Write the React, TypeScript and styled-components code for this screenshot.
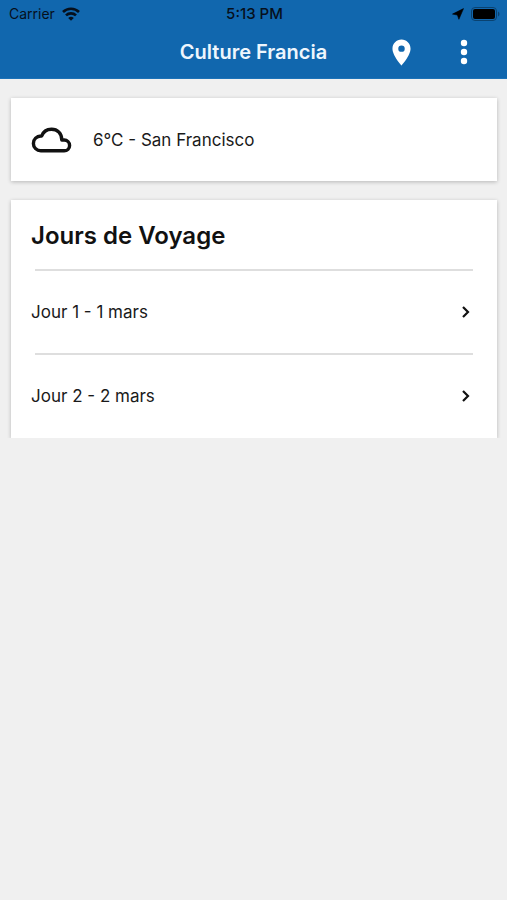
import React from "react";
import styled, { createGlobalStyle } from "styled-components";

const GlobalStyle = createGlobalStyle`
  *, *::before, *::after { box-sizing: border-box; }
  body {
    margin: 0;
    background: #f0f0f0;
    color: #1a1a1a;
    font-family: Inter, "Liberation Sans", sans-serif;
  }
`;

const Screen = styled.div`
  min-height: 100vh;
  background: #f0f0f0;
`;

const Header = styled.header`
  background: #1167ae;
  border-bottom: 1px solid #1c72b8;
`;

const StatusBar = styled.div`
  display: grid;
  grid-template-columns: 1fr auto 1fr;
  align-items: center;
  height: 26px;
  padding: 2px 7px 0 9px;
  color: #06101c;
  font-size: 14px;
  line-height: 20px;
`;

const StatusGroup = styled.div<{ $end?: boolean }>`
  display: flex;
  align-items: center;
  justify-content: ${(p) => (p.$end ? "flex-end" : "flex-start")};
  gap: 7px;
`;

const Clock = styled.time`
  font-size: 15px;
  font-weight: 500;
`;

const TitleBar = styled.div`
  display: grid;
  grid-template-columns: 1fr auto 1fr;
  align-items: center;
  height: 52px;
`;

const Title = styled.h1`
  grid-column: 2;
  margin: 0;
  color: #eef6fd;
  font-size: 20px;
  font-weight: 600;
  line-height: 28px;
`;

const Actions = styled.div`
  display: flex;
  justify-content: flex-end;
  gap: 27px;
  padding-right: 25px;
`;

const IconButton = styled.button`
  display: flex;
  align-items: center;
  justify-content: center;
  width: 36px;
  height: 36px;
  padding: 0;
  border: 0;
  background: none;
  color: #fff;
  cursor: pointer;
`;

const Content = styled.main`
  display: grid;
  gap: 19px;
  padding: 19px 10px 0 11px;
`;

const Card = styled.section`
  background: #fff;
  box-shadow: 0 1px 4px rgba(0, 0, 0, 0.24);
`;

const WeatherCard = styled(Card)`
  display: flex;
  align-items: center;
  gap: 21px;
  height: 83px;
  padding: 0 20px;
  font-size: 17px;
  line-height: 24px;
`;

const DaysClip = styled.div`
  overflow: hidden;
  margin: -4px -6px 0;
  padding: 4px 6px 0;
`;

const DaysTitle = styled.h2`
  margin: 0;
  padding: 20px 20px 17px;
  font-size: 24px;
  font-weight: 600;
  line-height: 32px;
  color: #111;
`;

const DayList = styled.ul`
  margin: 0;
  padding: 0 0 1px;
  list-style: none;
`;

const DayItem = styled.li`
  &::before {
    content: "";
    display: block;
    height: 2px;
    margin: 0 24px;
    background: #dedede;
  }
`;

const DayLink = styled.a`
  display: flex;
  align-items: center;
  justify-content: space-between;
  height: 82px;
  padding: 0 26px 0 20px;
  color: #1a1a1a;
  font-size: 17px;
  line-height: 24px;
  text-decoration: none;
`;

const WifiIcon = () => (
  <svg width="18" height="14" viewBox="0 0 18 14" fill="none" stroke="currentColor" strokeWidth="2.6" aria-hidden="true">
    <path d="M1 5a11.3 11.3 0 0 1 16 0" />
    <path d="M4 8.4a7.1 7.1 0 0 1 10 0" />
    <path d="M9 13.800 6.200 11a4 4 0 0 1 5.600 0z" fill="currentColor" stroke="none" />
  </svg>
);

const LocationIcon = () => (
  <svg width="12" height="12" viewBox="0 0 12 12" fill="#000" stroke="#000" strokeWidth="0.6" strokeLinejoin="round" aria-hidden="true">
    <path d="M11.500.6 6.900 11.300 5.400 7 .5 6.100z" />
  </svg>
);

const BatteryIcon = () => (
  <svg width="29" height="14" viewBox="0 0 29 14" aria-hidden="true">
    <rect x="0.5" y="0.5" width="25" height="13" rx="3.5" fill="none" stroke="#0a4270" />
    <rect x="2" y="2" width="22" height="10" rx="2" fill="#000" />
    <path d="M27 4.5c2 1 2 4 0 5z" fill="#0a4270" />
  </svg>
);

const PinIcon = () => (
  <svg width="31" height="31" viewBox="0 0 24 24" fill="currentColor" aria-hidden="true">
    <path d="M12 2C8.13 2 5 5.13 5 9c0 5.25 7 13 7 13s7-7.75 7-13c0-3.87-3.13-7-7-7zm0 9.5a2.5 2.5 0 0 1 0-5 2.5 2.5 0 0 1 0 5z" />
  </svg>
);

const MoreIcon = () => (
  <svg width="36" height="36" viewBox="0 0 36 36" fill="currentColor" aria-hidden="true">
    <circle cx="18" cy="9" r="3.2" />
    <circle cx="18" cy="18" r="3.2" />
    <circle cx="18" cy="27" r="3.2" />
  </svg>
);

const CloudIcon = () => (
  <svg width="41" height="26" viewBox="0 0 41 26" fill="none" stroke="#111" strokeWidth="3.4" strokeLinejoin="round" aria-hidden="true">
    <path d="M9.800 23.800H33.200a5.400 5.400 0 0 0 0-10.800h-2.400C30.800 6.500 26.500 2.200 20.500 2.200c-4.600 0-8.400 2.700-9.800 6.800H9.800a7.400 7.400 0 0 0 0 14.800z" />
  </svg>
);

const ChevronIcon = () => (
  <svg width="10" height="14" viewBox="0 0 10 14" fill="none" stroke="#111" strokeWidth="2.2" aria-hidden="true">
    <path d="m2 2 5 5-5 5" />
  </svg>
);

const days = ["Jour 1 - 1 mars", "Jour 2 - 2 mars"];

export default function App() {
  return (
    <Screen>
      <GlobalStyle />
      <Header>
        <StatusBar>
          <StatusGroup>
            <span>Carrier</span>
            <WifiIcon />
          </StatusGroup>
          <Clock>5:13 PM</Clock>
          <StatusGroup $end>
            <LocationIcon />
            <BatteryIcon />
          </StatusGroup>
        </StatusBar>
        <TitleBar>
          <Title>Culture Francia</Title>
          <Actions>
            <IconButton type="button" aria-label="Carte">
              <PinIcon />
            </IconButton>
            <IconButton type="button" aria-label="Menu">
              <MoreIcon />
            </IconButton>
          </Actions>
        </TitleBar>
      </Header>
      <Content>
        <WeatherCard>
          <CloudIcon />
          <span>6°C - San Francisco</span>
        </WeatherCard>
        <DaysClip>
          <Card>
            <DaysTitle>Jours de Voyage</DaysTitle>
            <DayList>
              {days.map((day) => (
                <DayItem key={day}>
                  <DayLink href="#">
                    <span>{day}</span>
                    <ChevronIcon />
                  </DayLink>
                </DayItem>
              ))}
            </DayList>
          </Card>
        </DaysClip>
      </Content>
    </Screen>
  );
}
